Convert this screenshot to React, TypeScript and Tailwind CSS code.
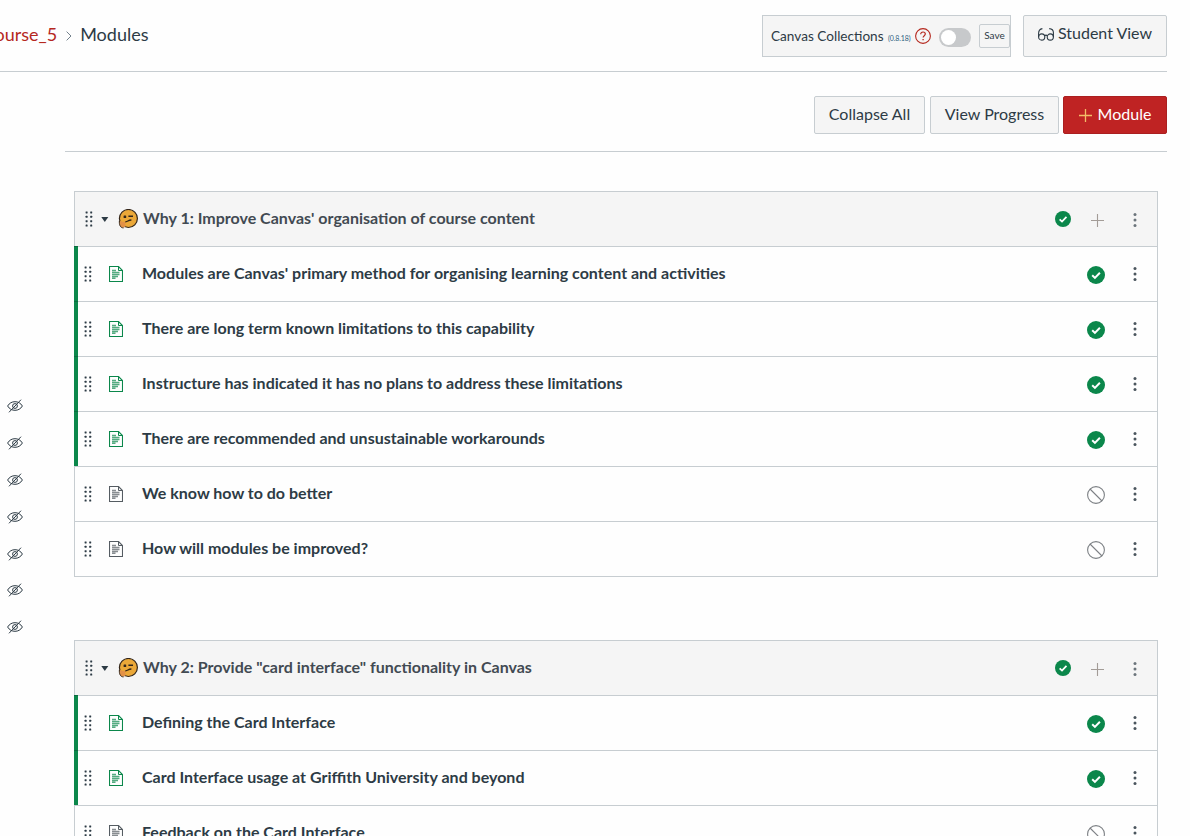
import React from "react";

type Item = { title: string; published: boolean };
type Module = { title: string; items: Item[] };

const modules: Module[] = [
  {
    title: "Why 1: Improve Canvas' organisation of course content",
    items: [
      { title: "Modules are Canvas' primary method for organising learning content and activities", published: true },
      { title: "There are long term known limitations to this capability", published: true },
      { title: "Instructure has indicated it has no plans to address these limitations", published: true },
      { title: "There are recommended and unsustainable workarounds", published: true },
      { title: "We know how to do better", published: false },
      { title: "How will modules be improved?", published: false },
    ],
  },
  {
    title: 'Why 2: Provide "card interface" functionality in Canvas',
    items: [
      { title: "Defining the Card Interface", published: true },
      { title: "Card Interface usage at Griffith University and beyond", published: true },
      { title: "Feedback on the Card Interface", published: false },
    ],
  },
];

function Grip() {
  return (
    <svg width="8" height="16" viewBox="0 0 8 16" fill="#2d3b45" className="shrink-0">
      {[0, 1, 2, 3].map((r) => (
        <g key={r}>
          <rect x="0.6" y={0.4 + r * 4.4} width="2" height="2" rx="0.4" />
          <rect x="5.2" y={0.4 + r * 4.4} width="2" height="2" rx="0.4" />
        </g>
      ))}
    </svg>
  );
}

function Kebab({ color }: { color: string }) {
  return (
    <svg width="4" height="14" viewBox="0 0 4 14" fill={color} className="shrink-0">
      <circle cx="2" cy="1.5" r="1.5" />
      <circle cx="2" cy="7" r="1.5" />
      <circle cx="2" cy="12.5" r="1.5" />
    </svg>
  );
}

function Check({ size }: { size: number }) {
  return (
    <svg width={size} height={size} viewBox="0 0 18 18" className="shrink-0">
      <circle cx="9" cy="9" r="9" fill="#0b874b" />
      <path d="M5.2 9.3l2.7 2.6 5-5.2" fill="none" stroke="#fff" strokeWidth="2" />
    </svg>
  );
}

function Unpublished() {
  return (
    <svg width="18" height="18" viewBox="0 0 18 18" fill="none" stroke="#7d8185" strokeWidth="1.1" className="shrink-0">
      <circle cx="9" cy="9" r="8.4" />
      <path d="M3 3l12 12" />
    </svg>
  );
}

function Page({ color }: { color: string }) {
  return (
    <svg width="14" height="16" viewBox="0 0 14 16" fill="none" stroke={color} className="shrink-0">
      <path d="M.5.5h9l4 4v11H.5z" strokeWidth="1.1" />
      <path d="M9.5.8v3.7h3.7" strokeWidth="1" />
      <path
        d="M3 4.5h4M3 6.5h7.5M3 8.5h7.5M3 10.5h6M3 12.3h3.5"
        strokeWidth="1.5"
        strokeOpacity="0.7"
      />
    </svg>
  );
}

function Thinking() {
  return (
    <svg width="20" height="20" viewBox="0 0 20 20" className="shrink-0">
      <circle cx="10.4" cy="9.5" r="9" fill="#eba838" stroke="#33261a" strokeWidth="1.2" />
      <path d="M1.4 12.2c1.300-.4 2.200.3 3 .8l2.800-.2c1 .5.600 1.200-.4 1.400 1.500 1.600.7 4.400-1.800 4.400-2.600 0-3.900-3-3.600-6.400z" fill="#e39147" />
      <path d="M1.400 11.800c-.3 3.800.6 7.100 4.200 7.100" fill="none" stroke="#33261a" strokeWidth="1" />
      <rect x="5.600" y="6.600" width="2.600" height="2.500" rx="0.5" fill="#33261a" />
      <path d="M10.400 7.300h4.600M7.400 12.700c2.600.2 2.400-1.700 6-1.700" fill="none" stroke="#33261a" strokeWidth="1.400" />
    </svg>
  );
}

function EyeOff() {
  return (
    <svg width="16" height="14" viewBox="0 0 16 14" fill="none" stroke="#2d3b45" strokeWidth="1" className="shrink-0">
      <path d="M.6 7C2.400 4 5 2.700 8 2.700s5.600 1.300 7.400 4.300c-1.800 3-4.400 4.300-7.400 4.300S2.400 10 .6 7z" />
      <circle cx="8" cy="7" r="2.400" />
      <path d="M2 13.300L14 .7" />
    </svg>
  );
}

function Glasses() {
  return (
    <svg width="16" height="13" viewBox="0 0 16 13" fill="none" stroke="#2d3b45" strokeWidth="1.100" className="shrink-0">
      <circle cx="3.700" cy="9" r="3.100" />
      <circle cx="12.300" cy="9" r="3.100" />
      <path d="M.6 9V5.500C.6 2.600 1.900 1 4.400.6M15.400 9V4.500C15.400 2 14 .8 11.200.6M6.600 7.800c.8-.7 2-.7 2.800 0" />
    </svg>
  );
}

function ModuleBox({ module }: { module: Module }) {
  return (
    <section className="border-b border-[#c7cdd1]">
      <div className="flex h-[55px] items-center border-x border-t border-[#c7cdd1] bg-[#f5f5f5] pr-[20px] pl-[10px]">
        <Grip />
        <svg width="8" height="5" viewBox="0 0 8 5" className="mt-px ml-[8px] shrink-0">
          <path d="M.3 0h7L3.800 5z" fill="#2d3b45" />
        </svg>
        <span className="ml-[9px] flex">
          <Thinking />
        </span>
        <h2 className="ml-[5px] flex-1 pb-[2px] font-bold text-[#424a52]">{module.title}</h2>
        <Check size={16} />
        <svg width="13" height="13" viewBox="0 0 13 13" stroke="#a39c97" strokeWidth="1.100" className="mt-[3px] ml-[20px]">
          <path d="M6.500 0v13M0 6.500h13" />
        </svg>
        <span className="mt-[2px] ml-[29px]">
          <Kebab color="#6b747b" />
        </span>
      </div>
      {module.items.map((item) => (
        <div key={item.title} className="flex h-[55px]">
          <div
            className={
              item.published ? "w-[4px] border-t border-[#0a6b3f] bg-[#0b874b]" : "w-px bg-[#c7cdd1]"
            }
          />
          <div
            className={
              "flex flex-1 items-center border-t border-r border-[#c7cdd1] pr-[20px] " +
              (item.published ? "pl-[6px]" : "pl-[9px]")
            }
          >
            <Grip />
            <span className="ml-[17px]">
              <Page color={item.published ? "#0b874b" : "#555c62"} />
            </span>
            <h3 className="ml-[19px] flex-1 pb-[2px] font-bold">{item.title}</h3>
            <span className="mt-[2px] mr-[28px]">{item.published ? <Check size={18} /> : <Unpublished />}</span>
            <Kebab color="#4a555d" />
          </div>
        </div>
      ))}
    </section>
  );
}

export default function App() {
  const button = "flex items-center rounded-[2px] border border-[#c7cdd1] bg-[#f5f5f5]";
  return (
    <div className="flex h-[836px] w-[1190px] flex-col overflow-hidden bg-[#fefefe] font-[Lato,sans-serif] text-[16px] leading-6 text-[#2d3b45]">
      <header className="flex h-[72px] w-[1167px] shrink-0 items-start border-b border-[#c7cdd1]">
        <nav className="flex flex-1 items-center pt-[22px] text-[18px]">
          <span className="-ml-[14px] text-[#b5281e]">course_5</span>
          <svg width="6" height="10" viewBox="0 0 6 10" fill="none" stroke="#73818c" className="mt-[3px] ml-[9px]">
            <path d="M.6.6L5 5 .6 9.400" />
          </svg>
          <span className="ml-[8px]">Modules</span>
        </nav>
        <div className="mt-[15px] flex h-[42px] w-[249px] items-center border border-[#c7cdd1] bg-[#f5f5f5] pl-[8px]">
          <span className="w-[113px] shrink-0 whitespace-nowrap text-[13.600px]">Canvas Collections</span>
          <span className="mt-[4px] ml-[4px] w-[23px] shrink-0 whitespace-nowrap text-[7px] tracking-[-0.1px] text-[#2f5f80]">(0.8.18)</span>
          <svg width="16" height="16" viewBox="0 0 16 16" fill="none" stroke="#b5281e" className="ml-[4px] shrink-0">
            <circle cx="8" cy="8" r="7.400" strokeWidth="1.100" />
            <path d="M5.700 6.200c0-1.400 1-2.200 2.300-2.200s2.300.8 2.300 2c0 1.700-2.200 1.700-2.200 3.600" strokeWidth="1.200" />
            <path d="M8.100 10.900v1.300" strokeWidth="1.300" />
          </svg>
          <span className="mt-[2px] ml-[8px] flex h-[19px] w-[32px] shrink-0 items-center rounded-full bg-[#c7c9cb] p-[2px]">
            <span className="h-[15px] w-[15px] rounded-full bg-white" />
          </span>
          <span className="ml-[8px] flex h-[24px] w-[31px] shrink-0 items-center justify-center rounded-[2px] border border-[#c7cdd1] pb-[2px] text-[10px]">
            Save
          </span>
        </div>
        <div className={button + " mt-[15px] ml-[12px] h-[42px] w-[144px] justify-center pb-[6px]"}>
          <span className="mt-[3px]">
            <Glasses />
          </span>
          <span className="ml-[4px]">Student View</span>
        </div>
      </header>
      <div className="flex min-h-0 flex-1">
        <aside className="flex w-[65px] shrink-0 flex-col gap-[22.900px] pt-[327px] pl-[7px]">
          {[0, 1, 2, 3, 4, 5, 6].map((n) => (
            <EyeOff key={n} />
          ))}
        </aside>
        <main className="w-[1102px]">
          <div className="flex h-[80px] items-start justify-end border-b border-[#c7cdd1] pt-[24px]">
            <div className={button + " h-[38px] w-[111px] justify-center pb-[2px]"}>Collapse All</div>
            <div className={button + " ml-[5px] h-[38px] w-[129px] justify-center pb-[2px]"}>View Progress</div>
            <div className="ml-[4px] flex h-[38px] w-[104px] items-center justify-center rounded-[2px] border border-[#aa1f20] bg-[#bf2323] pb-[2px] text-white">
              <svg width="13" height="13" viewBox="0 0 13 13" stroke="#f3bd68" strokeWidth="1.300" className="mt-[2px]">
                <path d="M6.500 0v13M0 6.500h13" />
              </svg>
              <span className="ml-[6px]">Module</span>
            </div>
          </div>
          <div className="flex flex-col gap-[63px] pt-[39px] pr-[9px] pl-[9px]">
            {modules.map((m) => (
              <ModuleBox key={m.title} module={m} />
            ))}
          </div>
        </main>
      </div>
    </div>
  );
}
